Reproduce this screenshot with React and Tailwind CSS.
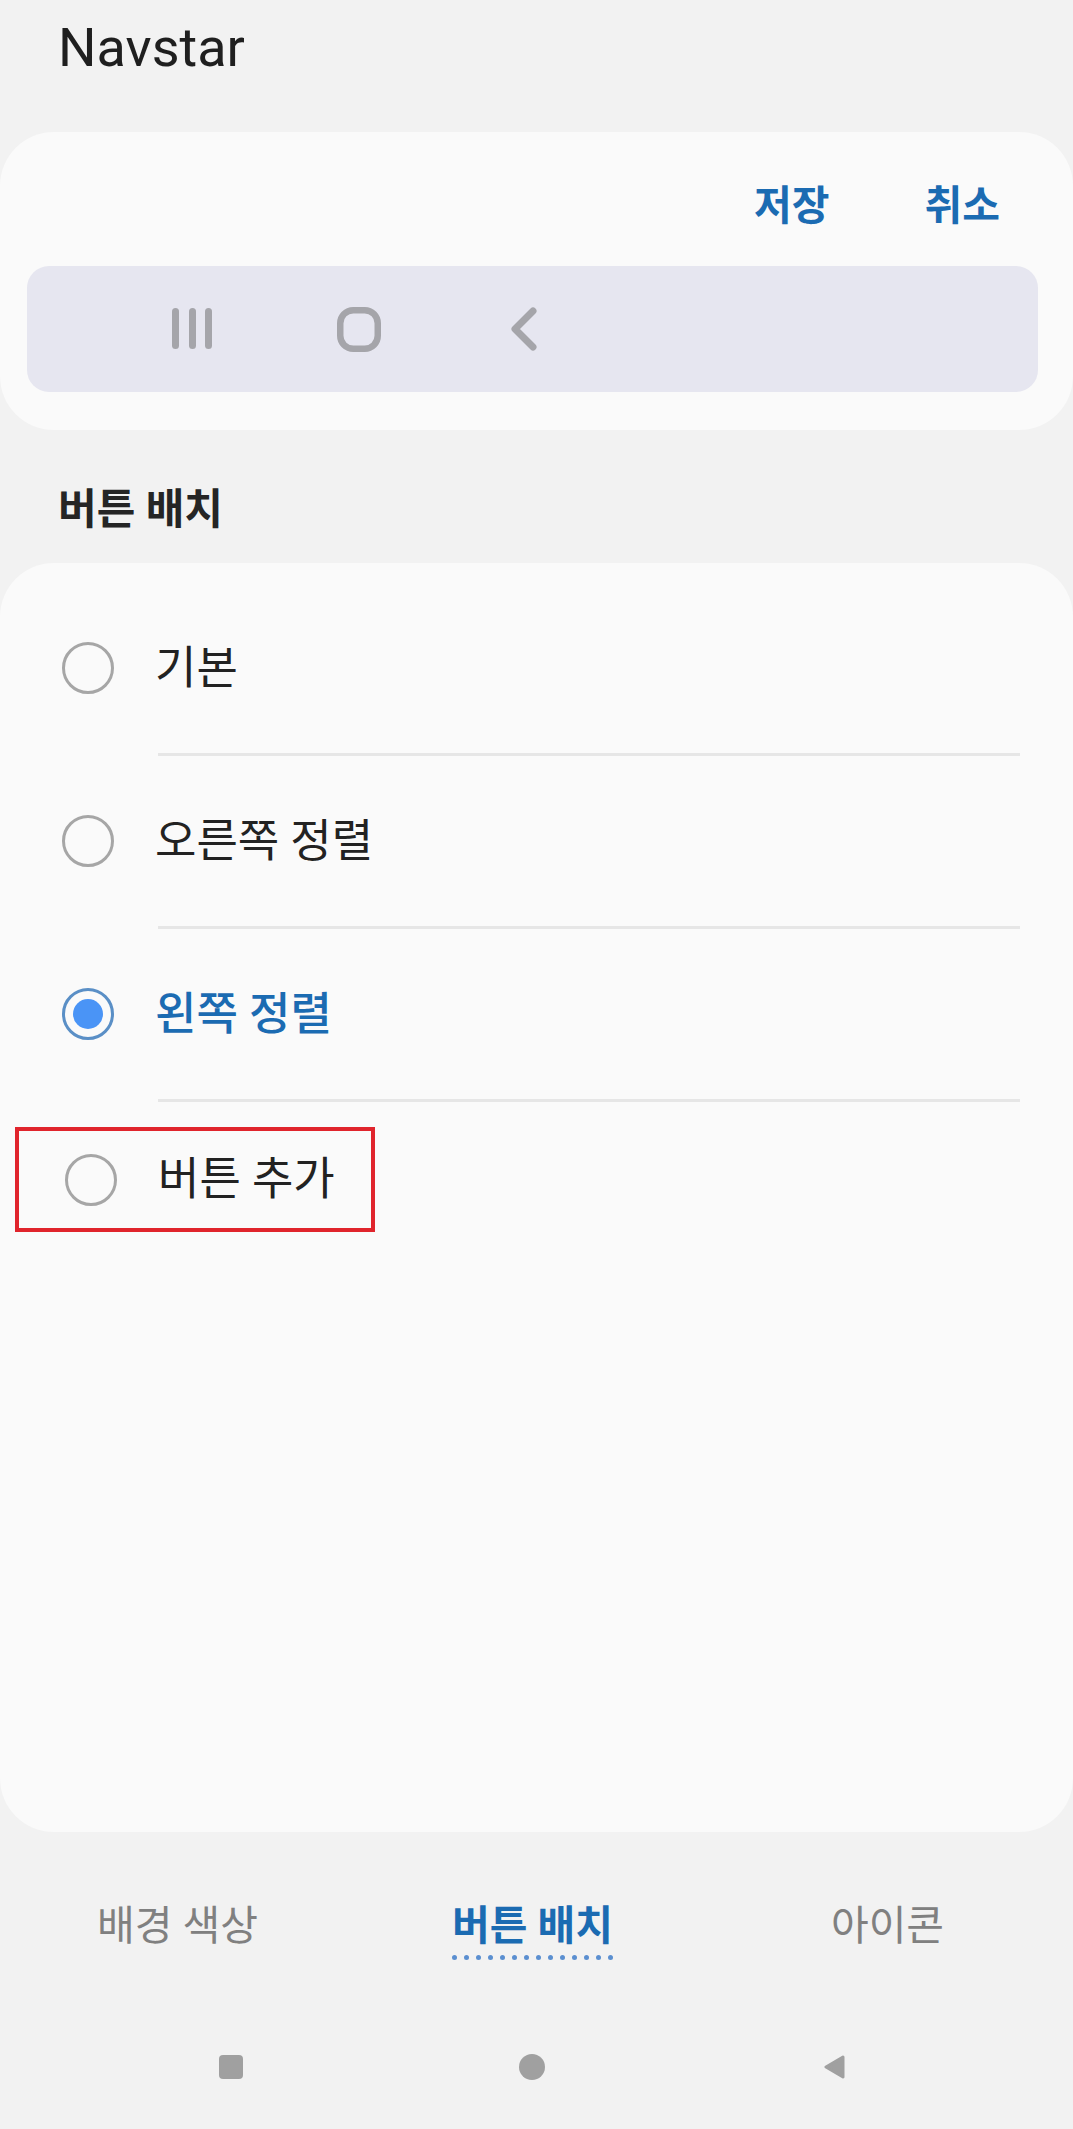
import React from 'react';

const options = [
  { label: '기본', selected: false },
  { label: '오른쪽 정렬', selected: false },
  { label: '왼쪽 정렬', selected: true },
];

const Radio = ({ selected }) => (
  <div
    className={
      'w-[52px] h-[52px] rounded-full border-[3px] flex items-center justify-center shrink-0 ' +
      (selected ? 'border-[#5a8fc6]' : 'border-[#a6a6a6]')
    }
  >
    {selected && <div className="w-[30px] h-[30px] rounded-full bg-[#4a94f6]" />}
  </div>
);

const App = () => {
  return (
    <div className="w-[1073px] h-[2129px] bg-[#f2f2f2] flex flex-col overflow-hidden font-['Roboto','Noto_Sans_CJK_KR',sans-serif]">
      {/* title */}
      <div className="pt-[21px] pl-[58px]">
        <h1 className="text-[54px] leading-none text-[#1f1f1f]">Navstar</h1>
      </div>

      {/* preview card */}
      <div className="mt-[57px] bg-[#fafafa] rounded-[54px] pt-[54px] pb-[38px]">
        <div className="flex justify-end gap-[95px] pr-[73px]">
          <span className="text-[41px] leading-none font-semibold text-[#1b6bb2]">저장</span>
          <span className="text-[41px] leading-none font-semibold text-[#1b6bb2]">취소</span>
        </div>
        <div className="mt-[39px] ml-[27px] w-[1011px] h-[126px] rounded-[22px] bg-[#e6e6f0] flex items-center">
          <svg className="ml-[143px]" width="44" height="44" viewBox="0 0 44 44" fill="none" stroke="#a5a5aa" strokeWidth="7" strokeLinecap="round">
            <line x1="5.5" y1="4.5" x2="5.5" y2="38.5" />
            <line x1="22.5" y1="4.5" x2="22.5" y2="38.5" />
            <line x1="38.5" y1="4.5" x2="38.5" y2="38.5" />
          </svg>
          <svg className="ml-[123px]" width="44" height="45" viewBox="0 0 44 45" fill="none" stroke="#a5a5aa" strokeWidth="6.5">
            <rect x="3.25" y="3.25" width="37.5" height="38.5" rx="13" />
          </svg>
          <svg className="ml-[127px]" width="32" height="44" viewBox="0 0 32 44" fill="none" stroke="#a5a5aa" strokeWidth="7" strokeLinecap="round" strokeLinejoin="round">
            <polyline points="25,4 7,22 25,40" />
          </svg>
        </div>
      </div>

      {/* section heading */}
      <h2 className="mt-[59px] pl-[58px] text-[42px] leading-none font-bold text-[#252525]">버튼 배치</h2>

      {/* options card */}
      <div className="mt-[32px] h-[1269px] bg-[#fafafa] rounded-[54px] pt-[20px]">
        {options.map((o) => (
          <div key={o.label}>
            <div className="h-[170px] flex items-center pl-[62px] gap-[41px]">
              <Radio selected={o.selected} />
              <span
                className={
                  'text-[45px] leading-none ' +
                  (o.selected ? 'text-[#1b6bb2] font-medium' : 'text-[#222222]')
                }
              >
                {o.label}
              </span>
            </div>
            <div className="ml-[158px] mr-[53px] h-[3px] bg-[#e6e6e6]" />
          </div>
        ))}
        <div className="pt-[25px] pl-[15px]">
          <div className="w-[360px] h-[105px] border-[4px] border-[#e0242c] flex items-center pl-[46px] gap-[41px]">
            <Radio selected={false} />
            <span className="text-[45px] leading-none text-[#222222]">버튼 추가</span>
          </div>
        </div>
      </div>

      {/* tabs */}
      <div className="mt-[74px] grid grid-cols-3 pr-[8px]">
        <div className="flex flex-col items-center">
          <span className="text-[41px] leading-none text-[#808080]">배경 색상</span>
        </div>
        <div className="flex flex-col items-center">
          <span className="text-[41px] leading-none font-bold text-[#1b6bb2]">버튼 배치</span>
          <div className="mt-[8px] flex gap-[7px]">
            {Array.from({ length: 14 }).map((_, i) => (
              <span key={i} className="w-[5px] h-[5px] rounded-full bg-[#5b8fd0]" />
            ))}
          </div>
        </div>
        <div className="flex flex-col items-center">
          <span className="text-[41px] leading-none text-[#808080]">아이콘</span>
        </div>
      </div>

      {/* system navigation */}
      <div className="mt-[94px] flex items-center pl-[219px]">
        <div className="w-[24px] h-[24px] rounded-[4px] bg-[#a0a0a0]" />
        <div className="ml-[276px] w-[26px] h-[26px] rounded-full bg-[#a0a0a0]" />
        <svg className="ml-[278px]" width="22" height="24" viewBox="0 0 22 24">
          <polygon points="20,2 3,12 20,22" fill="#a0a0a0" stroke="#a0a0a0" strokeWidth="3" strokeLinejoin="round" />
        </svg>
      </div>
    </div>
  );
};

export default App;
